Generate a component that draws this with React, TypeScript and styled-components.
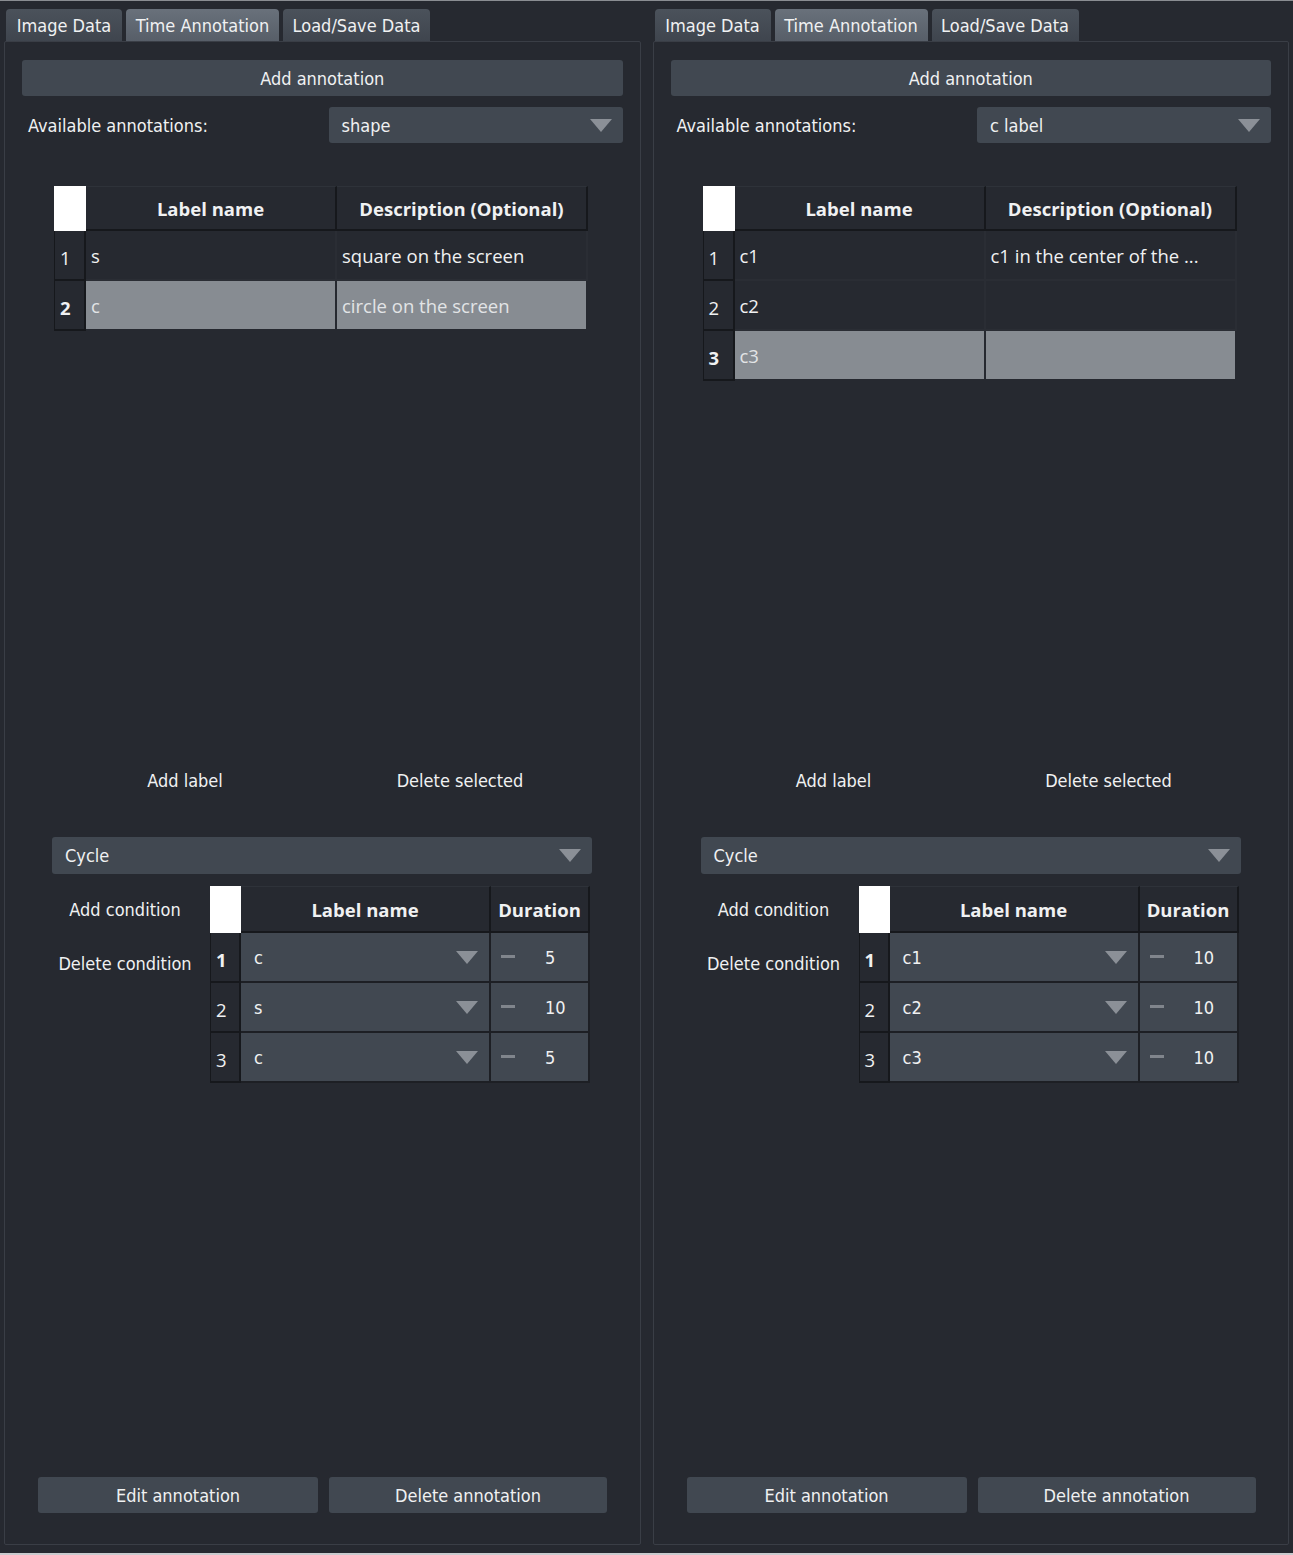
import React from "react";
import styled, { createGlobalStyle } from "styled-components";

const UI = `"DejaVu Sans Condensed", "Liberation Sans", sans-serif`;
const TABLE = `"Open Sans", "Noto Sans", sans-serif`;

const GlobalStyle = createGlobalStyle`
  html, body { margin: 0; padding: 0; background: #262930; }
  * { box-sizing: border-box; }
`;

const Root = styled.div`
  display: flex;
  gap: 12px;
  height: 1555px;
  padding: 0 4px;
  background: #262930;
  border-top: 1px solid #8a8d92;
  border-bottom: 2px solid #c9cbce;
  font-family: ${UI};
  font-stretch: condensed;
  font-size: 18px;
  color: #f0f1f2;
`;

const Panel = styled.div`
  display: flex;
  flex-direction: column;
  width: 637px;
`;

const TabBar = styled.div`
  display: flex;
  gap: 4px;
  padding: 8px 0 0 2px;
  height: 40px;
`;

const Tab = styled.div<{ $active?: boolean; $w: number }>`
  width: ${(p) => p.$w}px;
  height: 32px;
  display: flex;
  align-items: center;
  justify-content: center;
  border-radius: 4px 4px 0 0;
  background: ${(p) =>
    p.$active
      ? "linear-gradient(#69717b, #575e68)"
      : "linear-gradient(#4b525b, #3f454e)"};
  color: #f0f1f2;
  white-space: nowrap;
`;

const Pane = styled.div`
  height: 1504px;
  border: 1px solid #3a3e46;
  border-radius: 2px;
  display: flex;
  flex-direction: column;
  padding: 18px 17px 31px 17px;
`;

const WideButton = styled.div`
  height: 36px;
  background: #414851;
  border-radius: 3px;
  display: flex;
  align-items: center;
  justify-content: center;
`;

const FieldRow = styled.div`
  margin-top: 11px;
  height: 36px;
  display: flex;
  align-items: center;
  justify-content: space-between;
`;

const FieldLabel = styled.div`
  padding-left: 6px;
`;

const Combo = styled.div<{ $w: number; $h: number }>`
  width: ${(p) => p.$w}px;
  height: ${(p) => p.$h}px;
  background: #414851;
  border-radius: 3px;
  display: flex;
  align-items: center;
  justify-content: space-between;
  padding: 0 11px 0 13px;
`;

const CycleCombo = styled(Combo)`
  margin: 39px 0 0 30px;
`;

const ArrowSvg = styled.svg`
  flex: none;
  display: block;
`;

const Arrow = () => (
  <ArrowSvg width="22" height="13" viewBox="0 0 22 13">
    <polygon points="0,0 22,0 11,13" fill="#8b9097" />
  </ArrowSvg>
);

const LabelArea = styled.div`
  margin: 43px 0 0 32px;
  height: 576px;
`;

const Grid = styled.div<{ $cols: string }>`
  display: grid;
  grid-template-columns: ${(p) => p.$cols};
  font-family: ${TABLE};
  font-stretch: normal;
  font-size: 18.5px;
`;

const Corner = styled.div<{ $h: number }>`
  height: ${(p) => p.$h}px;
  background: #ffffff;
`;

const HeaderCell = styled.div<{ $h: number }>`
  height: ${(p) => p.$h}px;
  display: flex;
  align-items: center;
  justify-content: center;
  font-weight: 700;
  background: #262930;
  border-top: 1px solid #2e3239;
  border-right: 2px solid #16181c;
  border-bottom: 2px solid #16181c;
  white-space: nowrap;
`;

const RowHead = styled.div<{ $bold?: boolean; $h: number }>`
  height: ${(p) => p.$h}px;
  display: flex;
  align-items: center;
  padding: 5px 0 0 5px;
  font-weight: ${(p) => (p.$bold ? 700 : 400)};
  background: #262930;
  border-left: 1px solid #16181c;
  border-right: 2px solid #16181c;
  border-bottom: 2px solid #16181c;
`;

const Cell = styled.div<{ $sel?: boolean }>`
  height: 50px;
  display: flex;
  align-items: center;
  padding-left: 5px;
  background: ${(p) => (p.$sel ? "#878c92" : "#262930")};
  color: ${(p) => (p.$sel ? "#e2e4e6" : "#f0f1f2")};
  border-right: 2px solid ${(p) => (p.$sel ? "#262930" : "#2a2d34")};
  border-bottom: 2px solid ${(p) => (p.$sel ? "#262930" : "#2a2d34")};
  white-space: nowrap;
  overflow: hidden;
`;

const FlatRow = styled.div`
  margin-left: 32px;
  height: 36px;
  display: grid;
  grid-template-columns: 262px 288px;
  align-items: center;
`;

const FlatButton = styled.div`
  text-align: center;
`;

const CondArea = styled.div`
  margin: 12px 0 0 30px;
  display: flex;
  gap: 12px;
`;

const CondButtons = styled.div`
  width: 146px;
  padding-top: 4px;
  display: flex;
  flex-direction: column;
  gap: 16px;
`;

const CondButton = styled.div`
  height: 38px;
  display: flex;
  align-items: center;
  justify-content: center;
  white-space: nowrap;
`;

const CellBox = styled.div`
  height: 50px;
  padding: 0 2px 2px 0;
  background: #1d1f24;
  font-family: ${UI};
  font-stretch: condensed;
  font-size: 18px;
`;

const CellCombo = styled.div`
  height: 100%;
  background: #414851;
  display: flex;
  align-items: center;
  justify-content: space-between;
  padding: 0 11px 0 13px;
`;

const Spin = styled.div`
  height: 100%;
  background: #414851;
  display: flex;
  align-items: center;
  padding-left: 10px;
`;

const Minus = styled.span`
  width: 14px;
  height: 3px;
  background: #80858c;
  margin-right: 30px;
  margin-top: -1px;
`;

const BottomRow = styled.div`
  margin: auto 0 0 16px;
  display: flex;
  gap: 11px;
`;

const BottomButton = styled(WideButton)<{ $w: number }>`
  width: ${(p) => p.$w}px;
`;

type Label = { name: string; desc: string };
type Cond = { label: string; dur: number };

type PanelProps = {
  combo: string;
  labels: Label[];
  selected: number;
  conds: Cond[];
};

const AnnotationPanel = ({ combo, labels, selected, conds }: PanelProps) => (
  <Panel>
    <TabBar>
      <Tab $w={116}>Image Data</Tab>
      <Tab $w={153} $active>
        Time Annotation
      </Tab>
      <Tab $w={147}>Load/Save Data</Tab>
    </TabBar>
    <Pane>
      <WideButton>Add annotation</WideButton>
      <FieldRow>
        <FieldLabel>Available annotations:</FieldLabel>
        <Combo $w={294} $h={36}>
          <span>{combo}</span>
          <Arrow />
        </Combo>
      </FieldRow>
      <LabelArea>
        <Grid $cols="32px 251px 251px">
          <Corner $h={45} />
          <HeaderCell $h={45}>Label name</HeaderCell>
          <HeaderCell $h={45}>Description (Optional)</HeaderCell>
          {labels.map((l, i) => (
            <React.Fragment key={i}>
              <RowHead $h={50} $bold={i === selected}>
                {i + 1}
              </RowHead>
              <Cell $sel={i === selected}>{l.name}</Cell>
              <Cell $sel={i === selected}>{l.desc}</Cell>
            </React.Fragment>
          ))}
        </Grid>
      </LabelArea>
      <FlatRow>
        <FlatButton>Add label</FlatButton>
        <FlatButton>Delete selected</FlatButton>
      </FlatRow>
      <CycleCombo $w={540} $h={37}>
        <span>Cycle</span>
        <Arrow />
      </CycleCombo>
      <CondArea>
        <CondButtons>
          <CondButton>Add condition</CondButton>
          <CondButton>Delete condition</CondButton>
        </CondButtons>
        <Grid $cols="31px 250px 99px">
          <Corner $h={47} />
          <HeaderCell $h={47}>Label name</HeaderCell>
          <HeaderCell $h={47}>Duration</HeaderCell>
          {conds.map((c, i) => (
            <React.Fragment key={i}>
              <RowHead $h={50} $bold={i === 0}>
                {i + 1}
              </RowHead>
              <CellBox>
                <CellCombo>
                  <span>{c.label}</span>
                  <Arrow />
                </CellCombo>
              </CellBox>
              <CellBox>
                <Spin>
                  <Minus />
                  <span>{c.dur}</span>
                </Spin>
              </CellBox>
            </React.Fragment>
          ))}
        </Grid>
      </CondArea>
      <BottomRow>
        <BottomButton $w={280}>Edit annotation</BottomButton>
        <BottomButton $w={278}>Delete annotation</BottomButton>
      </BottomRow>
    </Pane>
  </Panel>
);

export default function App() {
  return (
    <>
      <GlobalStyle />
      <Root>
        <AnnotationPanel
          combo="shape"
          selected={1}
          labels={[
            { name: "s", desc: "square on the screen" },
            { name: "c", desc: "circle on the screen" },
          ]}
          conds={[
            { label: "c", dur: 5 },
            { label: "s", dur: 10 },
            { label: "c", dur: 5 },
          ]}
        />
        <AnnotationPanel
          combo="c label"
          selected={2}
          labels={[
            { name: "c1", desc: "c1 in the center of the ..." },
            { name: "c2", desc: "" },
            { name: "c3", desc: "" },
          ]}
          conds={[
            { label: "c1", dur: 10 },
            { label: "c2", dur: 10 },
            { label: "c3", dur: 10 },
          ]}
        />
      </Root>
    </>
  );
}
